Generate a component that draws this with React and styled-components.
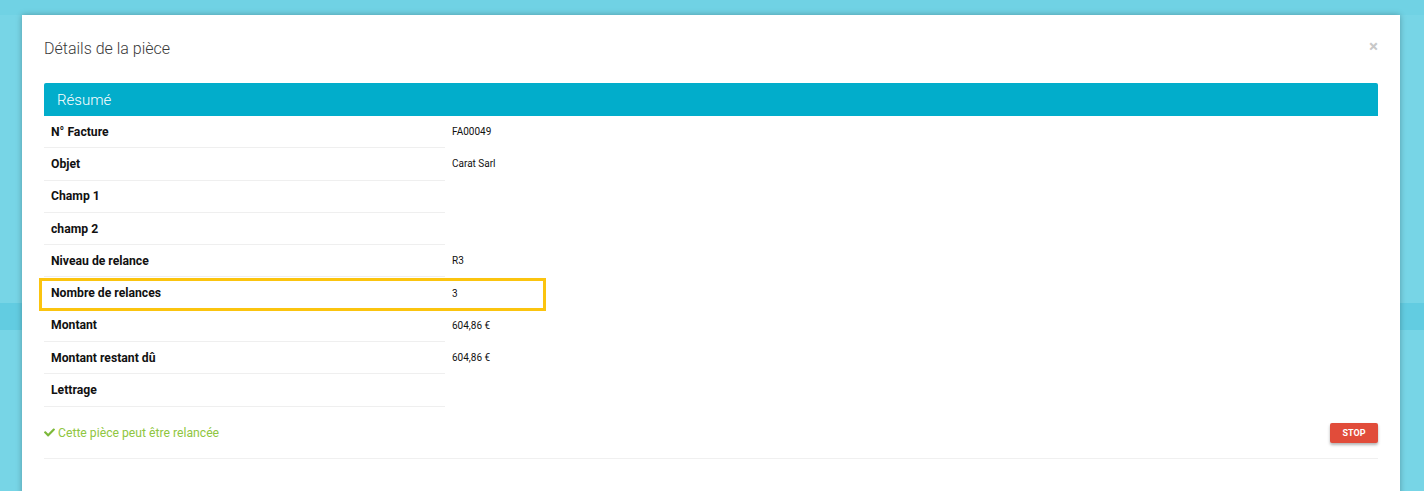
import React from "react";
import styled, { createGlobalStyle } from "styled-components";
import { FaCheck } from "react-icons/fa";

const GlobalStyle = createGlobalStyle`
  html, body {
    margin: 0;
    padding: 0;
    height: 100%;
  }
  body {
    background: #77d5e6;
    font-family: Roboto, "Liberation Sans", Arial, sans-serif;
    overflow: hidden;
  }
`;

const rows = [
  { label: "N° Facture", value: "FA00049" },
  { label: "Objet", value: "Carat Sarl" },
  { label: "Champ 1", value: "" },
  { label: "champ 2", value: "" },
  { label: "Niveau de relance", value: "R3" },
  { label: "Nombre de relances", value: "3", highlight: true },
  { label: "Montant", value: "604,86 €" },
  { label: "Montant restant dû", value: "604,86 €" },
  { label: "Lettrage", value: "" },
];

const App = () => {
  return (
    <>
      <GlobalStyle />
      <StyledPage>
        <div className="top-strip" />
        <div className="band" />
      </StyledPage>

      <StyledModal>
        <ModalHeader>
          <h4>Détails de la pièce</h4>
          <CloseButton aria-label="Fermer">×</CloseButton>
        </ModalHeader>

        <PanelHeading>Résumé</PanelHeading>

        <DetailTable>
          {rows.map((row) => (
            <DetailRow key={row.label} $highlight={row.highlight}>
              <span className="label">{row.label}</span>
              <span className="value">{row.value}</span>
            </DetailRow>
          ))}
        </DetailTable>

        <FooterRow>
          <StatusText>
            <FaCheck />
            Cette pièce peut être relancée
          </StatusText>
          <StopButton>Stop</StopButton>
        </FooterRow>

        <Separator />
      </StyledModal>
    </>
  );
};

const StyledPage = styled.div`
  height: 491px;
  display: flex;
  flex-direction: column;
  .top-strip {
    height: 15px;
    background: #70d2e4;
  }
  .band {
    margin-top: 288px;
    height: 27px;
    background: #62cce1;
  }
`;

const StyledModal = styled.div`
  position: absolute;
  top: 15px;
  left: 22px;
  width: 1378px;
  height: 500px;
  box-sizing: border-box;
  padding: 24px 22px 0 22px;
  background: #ffffff;
  box-shadow: 0 0 6px rgba(0, 0, 0, 0.28);
  display: flex;
  flex-direction: column;
`;

const ModalHeader = styled.div`
  display: flex;
  justify-content: space-between;
  align-items: flex-start;
  h4 {
    margin: 0;
    font-size: 16px;
    line-height: 20px;
    font-weight: 300;
    color: #3a3a3a;
  }
`;

const CloseButton = styled.span`
  font-size: 17px;
  line-height: 14px;
  font-weight: 700;
  color: #c8c8c8;
  cursor: pointer;
`;

const PanelHeading = styled.div`
  margin-top: 24px;
  height: 33px;
  display: flex;
  align-items: center;
  padding-left: 13px;
  background: #02adcb;
  border-radius: 2px 2px 0 0;
  color: #ffffff;
  font-size: 15px;
  font-weight: 300;
`;

const DetailTable = styled.div`
  display: flex;
  flex-direction: column;
`;

const DetailRow = styled.div`
  position: relative;
  display: grid;
  grid-template-columns: 401px 1fr;
  height: 32.3px;
  .label {
    box-sizing: border-box;
    display: flex;
    align-items: center;
    padding-left: 7px;
    border-bottom: 1px solid #efefef;
    font-size: 12.2px;
    font-weight: 700;
    color: #111111;
  }
  .value {
    display: flex;
    align-items: center;
    padding-left: 7px;
    padding-bottom: 1px;
    font-size: 10px;
    color: #111111;
  }
  ${(p) =>
    p.$highlight &&
    `
    &::after {
      content: "";
      position: absolute;
      left: -5px;
      top: 1px;
      width: 507px;
      height: 33px;
      box-sizing: border-box;
      border: 3px solid #fbc40f;
      pointer-events: none;
    }
  `}
`;

const FooterRow = styled.div`
  margin-top: 16px;
  height: 20px;
  display: flex;
  justify-content: space-between;
  align-items: center;
`;

const StatusText = styled.span`
  display: flex;
  align-items: center;
  gap: 3px;
  font-size: 12.2px;
  font-weight: 400;
  color: #8fc641;
  svg {
    width: 11px;
    height: 11px;
    color: #7cb83a;
  }
`;

const StopButton = styled.button`
  width: 48px;
  height: 20px;
  padding: 0;
  border: none;
  border-radius: 2px;
  background: #e14c3a;
  color: #ffffff;
  font-family: inherit;
  font-size: 9px;
  font-weight: 700;
  text-transform: uppercase;
  box-shadow: 0 2px 3px rgba(0, 0, 0, 0.3);
  cursor: pointer;
`;

const Separator = styled.div`
  margin-top: 15px;
  height: 1px;
  background: #f0f0f0;
`;

export default App;
